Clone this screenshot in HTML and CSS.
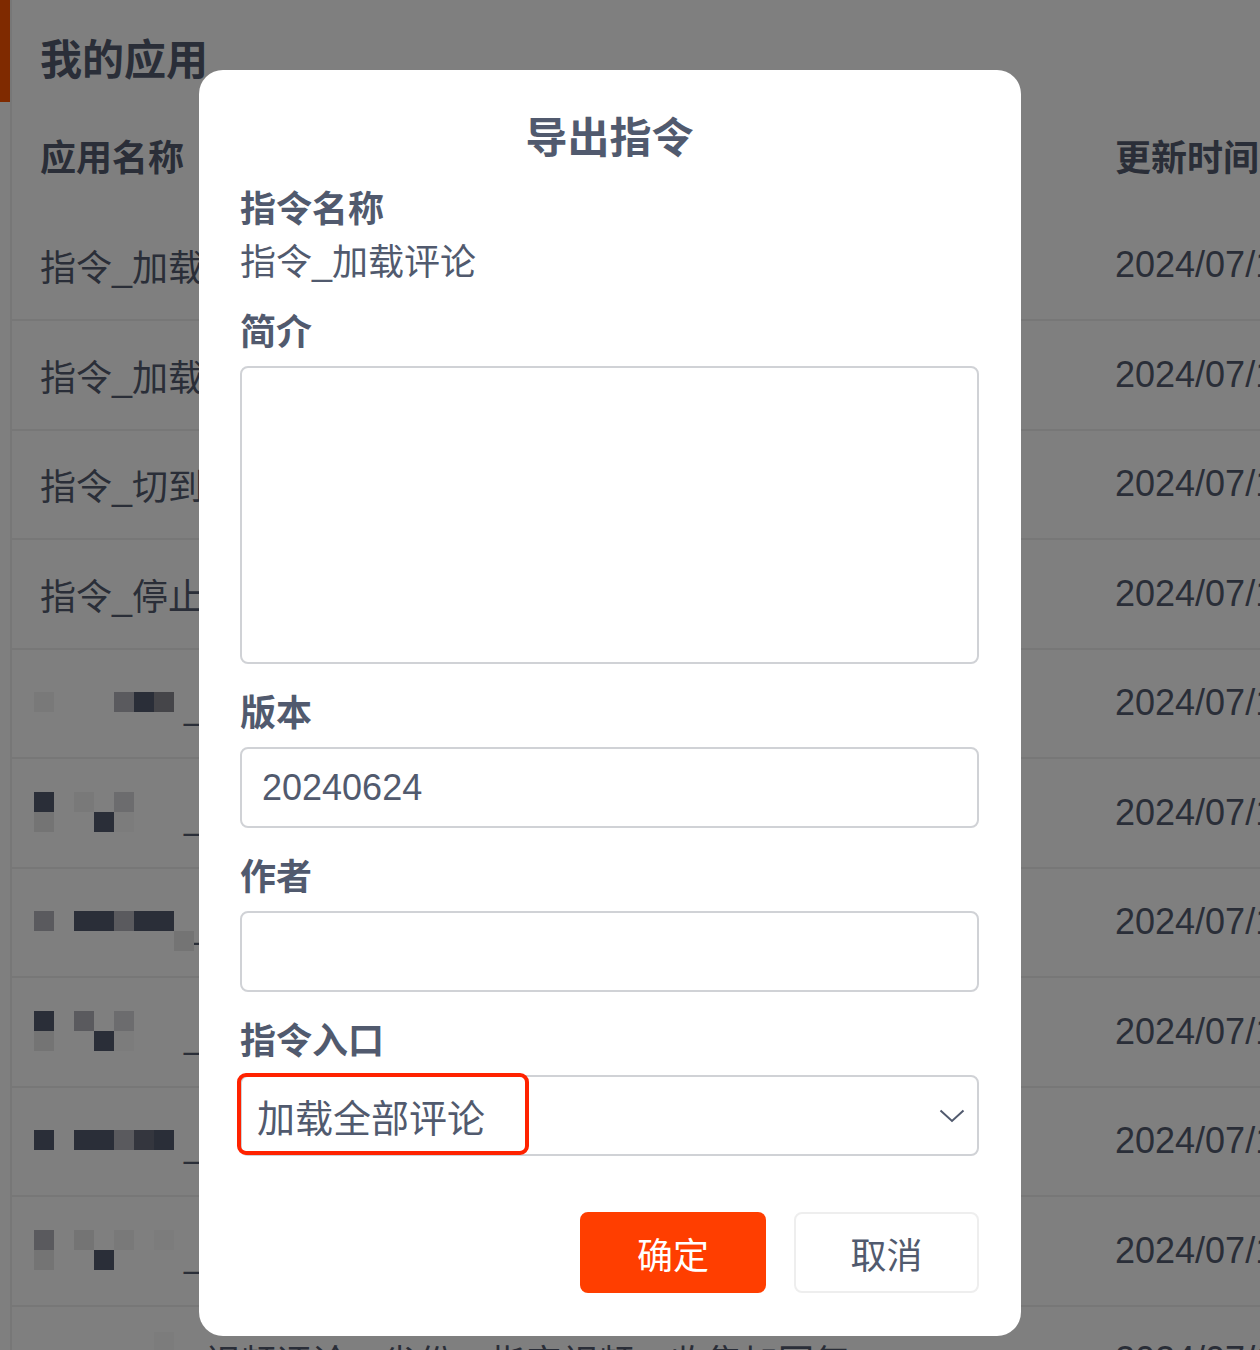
FILE: index.html
```html
<!DOCTYPE html>
<html lang="zh-CN">
<head>
<meta charset="utf-8">
<title>导出指令</title>
<link rel="stylesheet" href="styles.css">
</head>
<body>
<div class="app">
  <div class="rail"><div class="rail-active"></div></div>
  <main class="main">
    <h1 class="page-title">我的应用</h1>
    <div class="table">
      <div class="row head"><div class="c-name">应用名称</div><div class="c-date">更新时间</div></div>
      <div class="row"><div class="c-name">指令_加载评论</div><div class="c-date">2024/07/11 10:30</div></div>
      <div class="row"><div class="c-name">指令_加载回复</div><div class="c-date">2024/07/11 10:30</div></div>
      <div class="row"><div class="c-name">指令_切到下一个</div><div class="c-date">2024/07/11 10:30</div></div>
      <div class="row"><div class="c-name">指令_停止</div><div class="c-date">2024/07/11 10:30</div></div>
      <div class="row"><div class="c-name">　　　　_采集<span class="mz low"><i class="g4"></i><i></i><i></i><i></i><i class="g1"></i><i class="k"></i><i class="g5"></i><i></i><i></i><i></i><i></i><i></i><i></i><i></i><i></i><i></i></span></div><div class="c-date">2024/07/11 10:30</div></div>
      <div class="row"><div class="c-name">　　　　_采集<span class="mz"><i class="k"></i><i></i><i class="g4"></i><i></i><i class="g2"></i><i></i><i></i><i></i><i class="g3"></i><i></i><i></i><i class="k"></i><i class="g7"></i><i></i><i></i><i></i></span></div><div class="c-date">2024/07/11 10:30</div></div>
      <div class="row"><div class="c-name">　　　　_采集<span class="mz low"><i class="g1"></i><i></i><i class="k"></i><i class="k"></i><i class="g1"></i><i class="k"></i><i class="k"></i><i></i><i></i><i></i><i></i><i></i><i></i><i></i><i></i><i class="g3"></i></span></div><div class="c-date">2024/07/11 10:30</div></div>
      <div class="row"><div class="c-name">　　　　_采集<span class="mz"><i class="k"></i><i></i><i class="g1"></i><i></i><i class="g2"></i><i></i><i></i><i></i><i class="g3"></i><i></i><i></i><i class="k"></i><i class="g7"></i><i></i><i></i><i></i></span></div><div class="c-date">2024/07/11 10:30</div></div>
      <div class="row"><div class="c-name">　　　　_采集<span class="mz low"><i class="k"></i><i></i><i class="k"></i><i class="k"></i><i class="g1"></i><i class="g6"></i><i class="k"></i><i></i><i></i><i></i><i></i><i></i><i></i><i></i><i></i><i></i></span></div><div class="c-date">2024/07/11 10:30</div></div>
      <div class="row"><div class="c-name">　　　　_采集<span class="mz"><i class="g1"></i><i></i><i class="g3"></i><i></i><i class="g4"></i><i></i><i class="g7"></i><i></i><i class="g3"></i><i></i><i></i><i class="k"></i><i></i><i></i><i></i><i></i></span></div><div class="c-date">2024/07/11 10:30</div></div>
      <div class="row"><div class="c-name">　　　　_视频评论IP省份，指定视频，收集加回复<span class="mz high"><i></i><i></i><i></i><i></i><i></i><i></i><i class="g7"></i><i></i><i></i><i></i><i></i><i></i><i></i><i></i><i></i><i></i></span></div><div class="c-date">2024/07/11 10:30</div></div>
    </div>
  </main>
</div>

<div class="overlay">
  <div class="modal">
    <h2 class="modal-title">导出指令</h2>
    <div class="label">指令名称</div>
    <div class="value">指令_加载评论</div>
    <div class="label">简介</div>
    <div class="field textarea"></div>
    <div class="label">版本</div>
    <div class="field input">20240624</div>
    <div class="label">作者</div>
    <div class="field input"></div>
    <div class="label">指令入口</div>
    <div class="field input select">
      <span>加载全部评论</span>
      <svg class="chev" width="26" height="14" viewBox="0 0 26 14"><polyline points="1.5,1.5 13,12 24.5,1.5" fill="none" stroke="#515a6e" stroke-width="2"/></svg>
      <div class="highlight"></div>
    </div>
    <div class="actions">
      <div class="btn primary">确定</div>
      <div class="btn ghost">取消</div>
    </div>
  </div>
</div>
</body>
</html>
```
FILE: styles.css
```css
* { box-sizing: border-box; }
html, body { margin: 0; padding: 0; }
body {
  width: 1260px;
  height: 1350px;
  overflow: hidden;
  background: #fff;
  font-family: "Liberation Sans", "Noto Sans CJK SC", sans-serif;
  color: #545c70;
}
.app { display: flex; min-height: 1350px; }
.rail { width: 10px; flex: none; }
.rail-active { height: 102px; background: #ff5400; }
.main { flex: 1; border-left: 2px solid #eeeeee; min-width: 0; }
.page-title {
  margin: 0;
  height: 102px;
  padding: 37px 0 0 28px;
  font-size: 42px;
  line-height: 48px;
  font-weight: 700;
}
.table { width: 100%; }
.row {
  display: grid;
  grid-template-columns: 1103px 1fr;
  align-items: center;
  height: 109.5px;
  border-bottom: 2px solid #eeeeee;
  font-size: 36px;
  white-space: nowrap;
}
.row.head {
  border-bottom: none;
  font-weight: 700;
  padding-bottom: 3px;
}
.c-name { position: relative; padding-left: 28px; align-self: stretch; display: flex; align-items: center; }
.c-date { white-space: nowrap; }
.mz {
  position: absolute;
  left: 22px;
  top: 33px;
  display: grid;
  grid-template-columns: repeat(8, 20px);
  grid-template-rows: repeat(2, 20px);
}
.mz.low { top: 42px; }
.mz.high { top: 25px; }
.mz i { display: block; width: 20px; height: 20px; }
.mz i.k { background: #545c70; }
.mz i.g1 { background: #b4b4bc; }
.mz i.g2 { background: #d8d8dc; }
.mz i.g3 { background: #e8e8e8; }
.mz i.g4 { background: #f2f2f2; }
.mz i.g5 { background: #8a8a92; }
.mz i.g6 { background: #686c7c; }
.mz i.g7 { background: #f8f8f8; }

.overlay {
  position: fixed;
  inset: 0;
  background: rgba(0, 0, 0, 0.5);
  padding: 70px 0 0 199px;
}
.modal {
  width: 822px;
  height: 1266px;
  background: #fff;
  border-radius: 24px;
  padding: 41px 42px 0 41px;
  color: #515a6e;
  font-size: 36px;
}
.modal-title {
  margin: 3px 0 18px;
  text-align: center;
  font-size: 42px;
  line-height: 50px;
  font-weight: 700;
}
.label {
  font-weight: 700;
  line-height: 55px;
  height: 50px;
  margin-bottom: 11px;
}
.value { line-height: 50px; margin-top: -5px; margin-bottom: 17px; }
.field {
  border: 2px solid #d0d2d6;
  border-radius: 8px;
  margin-bottom: 22px;
}
.textarea { height: 298px; margin-top: 1px; }
.input {
  height: 81px;
  display: flex;
  align-items: center;
  padding-left: 20px;
}
.select { position: relative; font-size: 38px; padding-left: 15px; }
.chev { position: absolute; right: 12px; top: 32px; }
.highlight {
  position: absolute;
  left: -5px;
  top: -4px;
  width: 292px;
  height: 82px;
  border: 4px solid #ff2200;
  border-radius: 9px;
}
.actions {
  display: flex;
  justify-content: flex-end;
  gap: 28px;
  margin-top: 56px;
}
.btn {
  width: 186px;
  height: 81px;
  border-radius: 8px;
  display: flex;
  align-items: center;
  justify-content: center;
  font-size: 36px;
}
.btn.primary { background: #ff3e00; color: #fff; }
.btn.ghost { width: 185px; border: 2px solid #eeeeee; color: #515a6e; }
```
